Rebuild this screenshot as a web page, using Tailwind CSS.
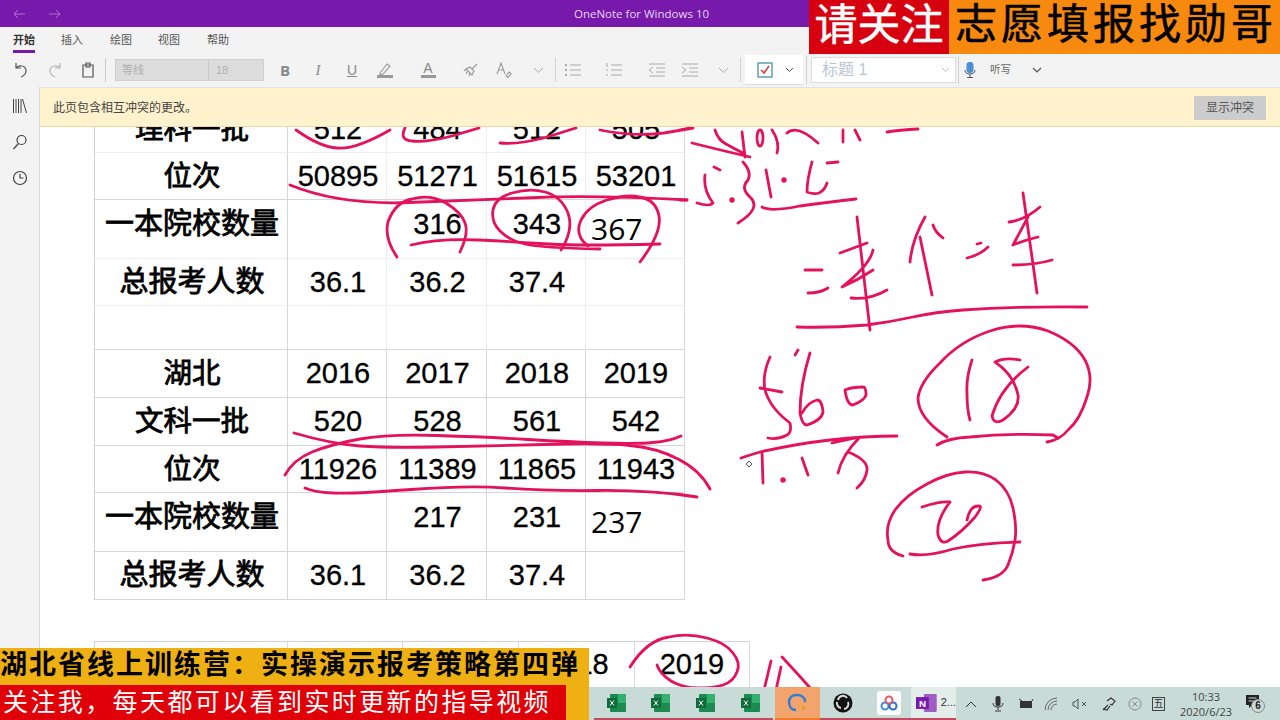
<!DOCTYPE html>
<html lang="zh"><head><meta charset="utf-8"><title>OneNote</title>
<script src="https://cdn.jsdelivr.net/npm/@tailwindcss/browser@4"></script></head>
<body class="m-0 overflow-hidden bg-white">
<div class="relative w-[1280px] h-[720px] overflow-hidden flex flex-col bg-white text-black [font-family:'Liberation_Sans','Noto_Sans_CJK_SC',sans-serif]">

<!-- title bar -->
<div class="relative h-[27px] shrink-0 bg-[#7719aa] flex items-center">
  <div class="flex items-center gap-[20px] pl-[11px]">
    <svg width="16" height="14" viewBox="0 0 16 14" fill="none" stroke="#b06fd2" stroke-width="1"><path d="M14 7H3M7 3L3 7l4 4"/></svg>
    <svg width="16" height="14" viewBox="0 0 16 14" fill="none" stroke="#b06fd2" stroke-width="1"><path d="M2 7h11M9 3l4 4-4 4"/></svg>
  </div>
  <div class="flex-1 text-center text-[11.5px] text-[#e8d4f2] pr-[60px] [font-family:'Open_Sans',sans-serif]">OneNote for Windows 10</div>
</div>

<!-- ribbon -->
<div class="h-[61px] shrink-0 bg-[#f3f3f3] border-b border-[#e2e2e2]">
  <div class="h-[27px] flex items-start pt-[6px] text-[11px] leading-[14px] text-[#555]">
    <div class="w-[22px] ml-[13px] h-[20px] border-b-[3px] border-[#7719aa] font-bold text-[#333]">开始</div>
    <div class="ml-[26px] w-[23px]">插入</div>
    <div class="ml-[26px] w-[23px]">绘图</div>
    <div class="ml-[25px] w-[23px]">视图</div>
    <div class="ml-[26px] w-[23px]">帮助</div>
  </div>
  <div class="h-[32px] flex items-center text-[#888]">
    <div class="w-[42px] flex justify-center"><svg width="18" height="18" viewBox="0 0 18 18" fill="none" stroke="#555" stroke-width="1.2"><path d="M4 2v5h5M4 7c3-3 9-3 10 2 .6 3-2 6-5 7"/></svg></div>
    <div class="w-[26px] flex justify-center"><svg width="18" height="18" viewBox="0 0 18 18" fill="none" stroke="#b5b5b5" stroke-width="1.2"><path d="M14 2v5H9M14 7c-3-3-9-3-10 2-.6 3 2 6 5 7"/></svg></div>
    <div class="w-[40px] flex justify-center"><svg width="16" height="18" viewBox="0 0 16 18" fill="none" stroke="#555" stroke-width="1.2"><path d="M3 4h10v12H3zM6 2h4v4H6z"/></svg></div>
    <div class="-ml-[3px] w-px h-[24px] bg-[#ccc]"></div>
    <div class="ml-[9px] w-[149px] h-[22px] bg-[#dcdcdc] border border-[#d0d0d0] flex items-center text-[11px] text-[#b0b0b0]">
      <div class="w-[93px] pl-[6px] border-r border-[#c8c8c8] leading-[20px]">等线</div><div class="pl-[7px]">18</div>
    </div>
    <div class="w-[42px] text-center text-[15px] font-bold text-[#8a8a8a] [font-family:'Open_Sans',sans-serif]">B</div>
    <div class="w-[24px] text-center text-[15px] italic text-[#8a8a8a] [font-family:'Liberation_Serif',serif]">I</div>
    <div class="ml-[10px] w-[24px] text-center text-[14px] underline text-[#8a8a8a]">U</div>
    <div class="ml-[9px] w-[24px] flex justify-center"><svg width="18" height="18" viewBox="0 0 18 18" fill="none" stroke="#999" stroke-width="1.1"><path d="M4 12L11 3l3 2-7 8-3 1z"/><path d="M1 15.5h16" stroke-width="3"/></svg></div>
    <div class="ml-[19px] w-[24px] flex flex-col items-center leading-[13px] text-[14px] text-[#8a8a8a]">A<span class="w-[15px] h-[3px] bg-[#999]"></span></div>
    <div class="ml-[19px] w-[24px] flex justify-center"><svg width="18" height="18" viewBox="0 0 18 18" fill="none" stroke="#999" stroke-width="1.1"><path d="M15 3l-5 5M4 8l6 6 2-4-4-4zM4 8l-2 2M6 10l-2 3M8 12l-1 3"/></svg></div>
    <div class="ml-[9px] w-[24px] flex justify-center"><svg width="18" height="18" viewBox="0 0 18 18" fill="none" stroke="#999" stroke-width="1.1"><path d="M2 13L6 2l4 11M3.5 9h5"/><path d="M11 15l3-4 2 1.500-3 4z"/></svg></div>
    <div class="ml-[10px] w-[24px] flex justify-center"><svg width="11" height="7" viewBox="0 0 11 7" fill="none" stroke="#aaa"><path d="M1 1l4.500 4.500L10 1"/></svg></div>
    <div class="ml-[5px] w-px h-[24px] bg-[#d4d4d4]"></div>
    <div class="ml-[5px] w-[24px] flex justify-center"><svg width="18" height="16" viewBox="0 0 18 16" stroke="#aaa" fill="none"><path d="M6 3h11M6 8h11M6 13h11"/><path d="M1 3h2M1 8h2M1 13h2" stroke-width="2"/></svg></div>
    <div class="ml-[17px] w-[24px] flex justify-center"><svg width="18" height="16" viewBox="0 0 18 16" stroke="#aaa" fill="none"><path d="M6 3h11M6 8h11M6 13h11M2 1v4M1 8h2M1 13h2"/></svg></div>
    <div class="ml-[19px] w-[24px] flex justify-center"><svg width="18" height="16" viewBox="0 0 18 16" stroke="#aaa" fill="none"><path d="M1 2h16M8 6h9M8 10h9M1 14h16M5 5L1 8l4 3"/></svg></div>
    <div class="ml-[9px] w-[24px] flex justify-center"><svg width="18" height="16" viewBox="0 0 18 16" stroke="#aaa" fill="none"><path d="M1 2h16M8 6h9M8 10h9M1 14h16M1 5l4 3-4 3"/></svg></div>
    <div class="ml-[9px] w-[24px] flex justify-center"><svg width="11" height="7" viewBox="0 0 11 7" fill="none" stroke="#aaa"><path d="M1 1l4.500 4.500L10 1"/></svg></div>
    <div class="ml-[5px] w-px h-[24px] bg-[#d4d4d4]"></div>
    <div class="ml-[4px] w-[58px] h-[30px] bg-white border-b border-[#dcdcdc] flex items-center">
      <svg class="ml-[12px]" width="16" height="16" viewBox="0 0 16 16" fill="none"><rect x="1" y="1" width="14" height="14" stroke="#4a8fa8" stroke-width="1.300"/><path d="M4 8l3 3 5-7" stroke="#d63a32" stroke-width="1.500"/></svg>
      <svg class="ml-[12px]" width="9" height="6" viewBox="0 0 9 6" fill="none" stroke="#555"><path d="M1 1l3.500 3.500L8 1"/></svg>
    </div>
    <div class="ml-[3px] w-px h-[28px] bg-[#cfcfcf]"></div>
    <div class="ml-[4px] w-[145px] h-[26px] bg-white border border-[#dcdcdc] flex items-center justify-between pl-[10px] pr-[5px] text-[16px] text-[#b9c6d2]">标题 1
      <svg width="9" height="6" viewBox="0 0 9 6" fill="none" stroke="#bbb"><path d="M1 1l3.500 3.500L8 1"/></svg>
    </div>
    <div class="ml-[2px] w-px h-[28px] bg-[#cfcfcf]"></div>
    <svg class="ml-[5px]" width="12" height="18" viewBox="0 0 12 18"><rect x="2.500" y="1" width="7" height="11" rx="3" fill="#4a90d9"/><path d="M1 9c0 3 2 4 5 4s5-1 5-4M6 13v3M3 16.500h6" fill="none" stroke="#555"/></svg>
    <div class="ml-[14px] text-[10.500px] text-[#666]">听写</div>
    <svg class="ml-[21px]" width="10" height="6" viewBox="0 0 10 6" fill="none" stroke="#555" stroke-width="1.200"><path d="M1 1l4 4 4-4"/></svg>
  </div>
</div>

<!-- main -->
<div class="flex-1 min-h-0 flex">
  <div class="w-[40px] shrink-0 bg-[#f3f3f3] border-r border-[#dadada] flex flex-col items-center pt-[11px] gap-[20px] -mt-px">
    <svg width="16" height="16" viewBox="0 0 16 16" fill="none" stroke="#444"><path d="M1.500 1v14M4 1v14M6.500 1v14M9 1v14M10.500 1l4 14"/></svg>
    <svg width="16" height="16" viewBox="0 0 16 16" fill="none" stroke="#444" stroke-width="1.200"><circle cx="9.500" cy="6" r="4.500"/><path d="M6.500 9.500L1.500 15"/></svg>
    <svg width="16" height="16" viewBox="0 0 16 16" fill="none" stroke="#444" stroke-width="1.200"><circle cx="8" cy="8" r="6.500"/><path d="M8 4v4h3.500"/></svg>
  </div>
  <div class="flex-1 min-w-0 flex flex-col">
    <div class="relative z-10 h-[39px] shrink-0 bg-[#fff2cc] border-b border-[#ead9a6] flex items-center justify-between pl-[13px] pr-[14px] pt-[2px] text-[12px] text-[#444]">
      <span>此页包含相互冲突的更改。</span>
      <span class="w-[72px] h-[24px] bg-[#cccccc] text-[#555] flex items-center justify-center">显示冲突</span>
    </div>
    <div class="relative flex-1 min-h-0 overflow-hidden pl-[54px] bg-white">
      <div class="-mt-[21px] w-[591px] border-l border-[#d2d2d2] grid grid-cols-[193px_99px_100px_99px_99px] grid-rows-[47px_47px_59px_47px_44px_48px_48px_47px_59px_48px] text-[29px] leading-[46px] text-center indent-[2px] [&>div]:border-r [&>div]:border-b [&>div]:border-[#d6d6d6] [&>div]:[-webkit-text-stroke:0.3px_#000]">
        <div class="text-[28.500px] [-webkit-text-stroke:0.8px_#000]! border-b-[#eeeeee]!">理科一批</div><div class="border-b-[#eeeeee]! border-r-[#eeeeee]!">512</div><div class="border-b-[#eeeeee]! border-r-[#eeeeee]!">484</div><div class="border-b-[#eeeeee]! border-r-[#eeeeee]!">512</div><div class="border-b-[#eeeeee]!">505</div>
        <div class="text-[28.500px] [-webkit-text-stroke:0.8px_#000]!">位次</div><div class="border-r-[#eeeeee]!">50895</div><div class="border-r-[#eeeeee]!">51271</div><div class="border-r-[#eeeeee]!">51615</div><div>53201</div>
        <div class="leading-[48px] [-webkit-text-stroke:0.8px_#000]! border-b-[#eeeeee]!">一本院校数量</div><div class="border-b-[#eeeeee]! border-r-[#eeeeee]!"></div><div class="leading-[48px] border-b-[#eeeeee]! border-r-[#eeeeee]!">316</div><div class="leading-[48px] border-b-[#eeeeee]! border-r-[#eeeeee]!">343</div><div class="text-left pl-[3px] [font-family:'Open_Sans',sans-serif] [-webkit-text-stroke:0px_#000]! text-[30px] leading-[58px] border-b-[#eeeeee]!">367</div>
        <div class="[-webkit-text-stroke:0.8px_#000]! border-b-[#eeeeee]!">总报考人数</div><div class="border-b-[#eeeeee]! border-r-[#eeeeee]!">36.1</div><div class="border-b-[#eeeeee]! border-r-[#eeeeee]!">36.2</div><div class="border-b-[#eeeeee]! border-r-[#eeeeee]!">37.4</div><div class="border-b-[#eeeeee]!"></div>
        <div></div><div class="border-r-[#eeeeee]!"></div><div class="border-r-[#eeeeee]!"></div><div class="border-r-[#eeeeee]!"></div><div></div>
        <div class="text-[28.500px] [-webkit-text-stroke:0.8px_#000]!">湖北</div><div>2016</div><div>2017</div><div>2018</div><div>2019</div>
        <div class="text-[28.500px] [-webkit-text-stroke:0.8px_#000]!">文科一批</div><div>520</div><div>528</div><div>561</div><div>542</div>
        <div class="text-[28.500px] [-webkit-text-stroke:0.8px_#000]!">位次</div><div>11926</div><div>11389</div><div>11865</div><div>11943</div>
        <div class="leading-[48px] [-webkit-text-stroke:0.8px_#000]!">一本院校数量</div><div></div><div class="leading-[48px]">217</div><div class="leading-[48px]">231</div><div class="text-left pl-[3px] [font-family:'Open_Sans',sans-serif] [-webkit-text-stroke:0px_#000]! text-[30px] leading-[58px]">237</div>
        <div class="[-webkit-text-stroke:0.8px_#000]!">总报考人数</div><div>36.1</div><div>36.2</div><div>37.4</div><div></div>
      </div>
      <div class="mt-[41px] w-[656px] border-l border-t border-[#d2d2d2] grid grid-cols-[193px_115px_116px_116px_115px] h-[60px] text-[29px] leading-[44px] text-center [&>div]:border-r [&>div]:border-[#dadada] [&>div]:[-webkit-text-stroke:0.3px_#000]">
        <div></div><div></div><div></div><div>2018</div><div>2019</div>
      </div>
      <svg class="absolute left-0 top-0" width="1240" height="593" viewBox="40 127 1240 593" fill="none" stroke="#e4125c" stroke-width="2.800" stroke-linecap="round" stroke-linejoin="round">
        <path d="M296 130Q320 147 337 148Q355 150 390 130"/>
        <path d="M405 128Q399 140 412 141Q425 143 452 136Q479 128 479 128"/>
        <path d="M500 143Q518 145 547 137Q576 128 576 128"/>
        <path d="M600 130Q635 137 664 133Q693 128 693 128"/>
        <path d="M290 185Q339 205 409 202.500Q479 200 537 197.500Q596 195 687 200"/>
        <path d="M397 257Q384 238 388 222Q395 202 412 199Q430 194 446 203Q462 213 465 223Q469 233 460 252"/>
        <path d="M561 250Q574 230 568 213Q561 196 545 192Q530 188 512 193Q495 198 493 210Q491 222 500 231Q510 241 525 244Q541 248 600 249"/>
        <path d="M640 262Q662 233 659 216Q656 200 640 197Q627 194 607 200Q588 206 581 220Q574 235 588 246"/>
        <path d="M411 245Q440 238 479 240Q518 242 549 244Q580 246 660 244"/>
        <path d="M294 433Q332 444 360 446Q387 448 437 447Q487 446 545 444.500Q603 443 630 445.500Q657 448 678 459Q700 470 710 489"/>
        <path d="M285 475Q293 460 312 452Q332 444 360 439Q387 434 437 435.500Q487 437 528 439.500Q570 442 603 443Q637 444 653 442.500Q670 441 681 436"/>
        <path d="M305 488Q313 492 333 493Q353 494 411 489.500Q470 485 506 488Q543 491 598 490.500Q653 490 697 497"/>
        <path d="M630 667Q647 640 669 637Q687 633 707 638Q726 643 733 653Q741 663 737 672Q733 682 723 685Q714 688 698 688Q683 688 671 681Q660 674 657 665"/>
        <path d="M771 661L764 690M781 667L776 690M782 657Q796 672 812 690"/>
        <path d="M692 143Q720 150 750 157M715 130Q718 140 726 144Q733 148 743 153M742 132L745 157M772 130Q780 142 777 153M787 133Q797 124 818 143M843 130V142M855 130L860 140M887 132Q900 130 918 129"/>
        <ellipse cx="760" cy="138" rx="3" ry="8"/>
        <path d="M680 130L690 128M680 200L687 200"/>
        <path d="M705 175Q703 190 713 203Q710 207 697 203M714 167L720 170M743 162Q752 172 748 180Q740 188 750 197Q762 208 738 223M766 170L771 197M827 163L838 162M812 162Q807 180 807 192Q822 198 827 183M762 207Q770 212 800 206Q830 202 856 199"/>
        <circle cx="732" cy="200" r="1.300"/><circle cx="784" cy="180" r="1.300"/>
        <path d="M805 270H822M808 293Q820 293 828 288M840 253L867 243M857 217L870 330M873 250Q870 265 842 287Q858 280 873 270M851 298Q870 300 887 290"/>
        <path d="M797 327Q830 328 867 325Q890 322 913 317Q935 312 963 310Q1020 306 1087 307"/>
        <path d="M925 217Q912 240 910 262M920 237L932 295M933 225Q935 232 943 238M967 258Q980 255 988 247M977 244L981 243"/>
        <path d="M1023 193L1037 293M1009 222Q1025 220 1040 207M1028 217Q1020 232 1013 245Q1025 240 1038 237M1013 265Q1035 265 1052 260"/>
        <path d="M770 357Q762 375 765 390Q770 408 790 423Q792 432 787 435Q778 440 768 438M760 388L782 392M810 353Q800 385 800 413Q802 425 807 425Q822 420 823 412Q822 400 817 400Q808 402 802 413M798 350L795 355M845 390Q847 405 853 405Q865 400 866 395Q866 387 863 387Q852 387 845 390"/>
        <path d="M741 458Q750 455 760 452Q795 444 830 440Q865 436 897 436M762 452L763 483M802 458L808 475M832 443L860 437Q842 455 838 473M848 452Q868 460 867 470Q866 480 857 488"/>
        <circle cx="783" cy="480" r="1.300"/>
        <path d="M947 437Q918 418 918 398Q920 382 940 363Q960 341 990 331Q1020 321 1048 331Q1075 342 1085 360Q1094 377 1087 397Q1080 420 1068 430Q1060 440 1047 442"/>
        <path d="M937 445Q948 438 970 437Q1010 433 1053 435L1058 438"/>
        <path d="M972 360Q966 378 967 393Q967 410 970 420M1028 367Q1000 388 992 416Q994 425 1003 420Q1020 408 1018 395Q1014 375 995 362Q1005 357 1020 360"/>
        <path d="M903 556Q888 552 888 540Q885 525 895 510Q906 495 927 484Q947 473 965 472Q983 471 996 480Q1009 490 1013 508Q1017 527 1015 540Q1013 553 1008 565Q1003 577 983 580"/>
        <path d="M910 554Q927 557 953 549Q980 543 1020 542"/>
        <path d="M922 507Q940 501 950 502Q936 520 938 535Q941 545 948 541Q962 532 975 517Q984 505 978 506Q970 506 967 520"/>
      </svg>
      <svg class="absolute left-[705px] top-[333px]" width="8" height="8" viewBox="0 0 8 8" fill="none" stroke="#555"><path d="M4 1l3 3-3 3-3-3z"/></svg>
    </div>
  </div>
</div>

<!-- promo top right -->
<div class="absolute right-0 top-0 h-[54px] w-[471px] flex overflow-hidden">
  <div class="w-[140px] bg-[#d7000f] text-white text-[43px] [-webkit-text-stroke:0.5px_#fff] leading-[50px] text-center">请关注</div>
  <div class="flex-1 bg-[#f7890f] text-black text-[42px] [-webkit-text-stroke:0.6px_#000] leading-[50px] pl-[6px] tracking-[4px] whitespace-nowrap">志愿填报找勋哥</div>
</div>

<!-- promo bottom left -->
<div class="absolute left-0 bottom-0 w-[589px] h-[72px] bg-[#eeb012] overflow-hidden">
  <div class="h-[37px] text-[27px] leading-[34px] font-bold tracking-[2px] whitespace-nowrap">湖北省线上训练营：实操演示报考策略第四弹</div>
  <div class="w-[566px] h-[35px] bg-[#e00008] text-white text-[25px] leading-[35px] tracking-[2.400px] pl-[3px] whitespace-nowrap">关注我，每天都可以看到实时更新的指导视频</div>
</div>

<!-- taskbar -->
<div class="absolute left-[589px] right-0 bottom-0 h-[33px] bg-[#c8dbd6] flex items-stretch text-[#333]">
  <div class="w-[5px]"></div>
  <div class="w-[45px] border-b-2 border-[#c24a63] flex items-center justify-center"><svg width="20" height="20" viewBox="0 0 20 20"><rect x="3" y="1" width="16" height="18" rx="1" fill="#1a8a50"/><rect x="11" y="1" width="8" height="9" fill="#33b06e"/><rect x="0" y="5" width="10" height="10" fill="#0f6b3a"/><path d="M3 7.500l4 5M7 7.500l-4 5" stroke="#fff"/></svg></div>
  <div class="w-[44px] border-b-2 border-[#c24a63] flex items-center justify-center"><svg width="20" height="20" viewBox="0 0 20 20"><rect x="3" y="1" width="16" height="18" rx="1" fill="#1a8a50"/><rect x="11" y="1" width="8" height="9" fill="#33b06e"/><rect x="0" y="5" width="10" height="10" fill="#0f6b3a"/><path d="M3 7.500l4 5M7 7.500l-4 5" stroke="#fff"/></svg></div>
  <div class="w-[45px] border-b-2 border-[#c24a63] flex items-center justify-center"><svg width="20" height="20" viewBox="0 0 20 20"><rect x="3" y="1" width="16" height="18" rx="1" fill="#1a8a50"/><rect x="11" y="1" width="8" height="9" fill="#33b06e"/><rect x="0" y="5" width="10" height="10" fill="#0f6b3a"/><path d="M3 7.500l4 5M7 7.500l-4 5" stroke="#fff"/></svg></div>
  <div class="w-[45px] border-b-2 border-[#c24a63] flex items-center justify-center"><svg width="20" height="20" viewBox="0 0 20 20"><rect x="3" y="1" width="16" height="18" rx="1" fill="#1a8a50"/><rect x="11" y="1" width="8" height="9" fill="#33b06e"/><rect x="0" y="5" width="10" height="10" fill="#0f6b3a"/><path d="M3 7.500l4 5M7 7.500l-4 5" stroke="#fff"/></svg></div>
  <div class="ml-[2px] w-[45px] bg-[#f2a46c] border-b-2 border-[#f07b28] flex items-center justify-center"><svg width="22" height="22" viewBox="0 0 22 22" fill="none"><path d="M9 18C4 18 2 14 2 10S5 3 10 3s8 3 8 7" stroke="#2f7fd6" stroke-width="2.500"/><path d="M14 13l5 2-3 4z" fill="#e8a020"/></svg></div>
  <div class="w-[46px] border-b-2 border-[#c24a63] flex items-center justify-center"><svg width="20" height="20" viewBox="0 0 20 20"><circle cx="10" cy="10" r="9.500" fill="#111"/><path d="M5 7a5 5 0 0 1 9-2M15 9a5 5 0 0 1-4 7M8 15a5 5 0 0 1-4-6" fill="none" stroke="#ddd" stroke-width="2"/></svg></div>
  <div class="w-[45px] border-b-2 border-[#c24a63] flex items-center justify-center"><div class="w-[24px] h-[24px] bg-white rounded-[3px] flex items-center justify-center"><svg width="18" height="16" viewBox="0 0 18 16" fill="none" stroke-width="2"><circle cx="5" cy="11" r="3.500" stroke="#3d8fe0"/><circle cx="13" cy="11" r="3.500" stroke="#2a6fd0"/><circle cx="9" cy="5" r="3.500" stroke="#e05a6a"/></svg></div></div>
  <div class="w-[45px] bg-[#e3edea] border-b-2 border-[#c24a63] flex items-center pl-[5px] gap-[3px] text-[11px]"><svg width="22" height="20" viewBox="0 0 22 20"><rect x="8" y="1" width="13" height="18" rx="1" fill="#a05cc4"/><rect x="0" y="4" width="13" height="12" fill="#7719aa"/><text x="3" y="14" font-size="10" fill="#fff" font-weight="bold" font-family="Liberation Sans">N</text></svg>2...</div>
  <div class="flex-1 flex items-center text-[11px]">
    <svg class="ml-[9px]" width="12" height="8" viewBox="0 0 12 8" fill="none" stroke="#333"><path d="M1 7l5-5 5 5"/></svg>
    <svg class="ml-[15px]" width="12" height="18" viewBox="0 0 12 18"><rect x="3.500" y="1" width="5" height="10" rx="2" fill="#333"/><path d="M1 8c0 3 2 4 5 4s5-1 5-4M6 12v3M3 16h6" fill="none" stroke="#333"/></svg>
    <svg class="ml-[14px]" width="16" height="14" viewBox="0 0 16 14"><rect x="2" y="4" width="12" height="7" fill="#333"/><path d="M1 2l3 2M14 4l1-2" stroke="#333"/></svg>
    <svg class="ml-[10px]" width="14" height="14" viewBox="0 0 14 14" fill="none" stroke="#666"><path d="M1 13A12 12 0 0 1 13 1M4 13a9 9 0 0 1 9-9M7 13a6 6 0 0 1 6-6"/></svg>
    <svg class="ml-[14px]" width="16" height="14" viewBox="0 0 16 14" fill="none" stroke="#555"><path d="M1 5h2l3-3v10L3 9H1zM10 5l4 4M14 5l-4 4"/></svg>
    <svg class="ml-[13px]" width="16" height="16" viewBox="0 0 16 16" fill="none" stroke="#333" stroke-width="1.200"><path d="M2 14l5-5M6 5l4-3 4 3-3 4-2-1M9 10l-3 4-4-1"/></svg>
    <svg class="ml-[11px]" width="14" height="14" viewBox="0 0 14 14" fill="none" stroke="#888"><circle cx="7" cy="7" r="6"/><path d="M4.500 4.500l5 5M9.500 4.500l-5 5"/></svg>
    <span class="ml-[10px] w-[13px] h-[14px] border border-[#444] text-[10px] leading-[12px] text-center">五</span>
    <div class="ml-[8px] w-[66px] text-center text-[11px] leading-[15px] text-[#444] [font-family:'Open_Sans',sans-serif]">10:33<br>2020/6/23</div>
    <div class="relative ml-[6px] w-[20px] h-[20px]">
      <svg width="15" height="15" viewBox="0 0 15 15"><path d="M1 1h13v10H7l-3 3v-3H1z" fill="#222"/><path d="M3.500 4h8M3.500 7h8" stroke="#c8dbd6"/></svg>
      <span class="absolute left-[6px] top-[5px] w-[14px] h-[14px] rounded-full bg-[#c8dbd6] border border-[#888] text-[10px] leading-[12px] text-center font-bold text-[#222]">6</span>
    </div>
  </div>
</div>
</div>
</body></html>
